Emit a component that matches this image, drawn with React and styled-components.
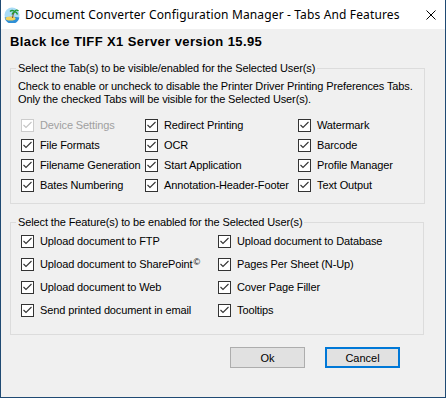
import React from "react";
import styled, { createGlobalStyle } from "styled-components";

const GlobalStyle = createGlobalStyle`
  html, body { margin: 0; padding: 0; background: #ffffff; }
  body { font-family: "Liberation Sans", Arial, sans-serif; }
  * { box-sizing: border-box; }
`;

const Window = styled.div`
  width: 446px;
  height: 398px;
  border: 1px solid #1f4a73;
  border-top: none;
  background: #f0f0f0;
  display: flex;
  flex-direction: column;
  overflow: hidden;
`;

const TitleBar = styled.div`
  height: 29px;
  flex: 0 0 29px;
  background: #ffffff;
  display: flex;
  align-items: center;
  padding: 0 9px 0 3px;
  gap: 5px;
`;

const Title = styled.div`
  flex: 1;
  font-family: "Noto Sans", "Open Sans", sans-serif;
  font-size: 12px;
  letter-spacing: 0.14px;
  color: #000;
  white-space: nowrap;
  line-height: 16px;
`;

const Body = styled.div`
  flex: 1;
  padding: 6px 20px 0 8px;
  display: flex;
  flex-direction: column;
  font-size: 11px;
  letter-spacing: -0.12px;
  color: #000;
`;

const Heading = styled.div`
  font-weight: bold;
  font-size: 13px;
  letter-spacing: 0.4px;
  line-height: 14px;
  padding-left: 1px;
`;

const Group = styled.fieldset`
  margin: ${(p) => p.$top}px ${(p) => p.$right}px 0 1px;
  padding: 0 0 ${(p) => p.$bottom}px 7px;
  border: 1px solid #dcdcdc;
  min-width: 0;
`;

const Legend = styled.legend`
  padding: 0 2px;
  margin-left: -2px;
  font-size: 11px;
  line-height: 13px;
`;

const Desc = styled.div`
  margin-top: 5px;
  line-height: 13px;
`;

const Grid = styled.div`
  display: grid;
  grid-template-columns: ${(p) => p.$cols};
  grid-auto-rows: ${(p) => p.$row}px;
  align-items: center;
  margin: ${(p) => p.$top}px 0 0 3px;
`;

const Item = styled.label`
  display: flex;
  align-items: center;
  gap: 6px;
  white-space: nowrap;
  line-height: 13px;
  color: ${(p) => (p.$disabled ? "#a0a0a0" : "#000")};
`;

const Box = styled.span`
  width: 13px;
  height: 13px;
  flex: 0 0 13px;
  border: 1px solid ${(p) => (p.$disabled ? "#cccccc" : "#333333")};
  background: #ffffff;
  display: flex;
  align-items: center;
  justify-content: center;
`;

const Sup = styled.span`
  font-size: 9px;
  position: relative;
  top: -3px;
  margin-left: 1px;
`;

const ButtonRow = styled.div`
  display: flex;
  justify-content: flex-end;
  gap: 20px;
  margin-top: 12px;
  padding-right: 25px;
`;

const Button = styled.button`
  width: 75px;
  height: 21px;
  padding: 0;
  font-family: "Liberation Sans", Arial, sans-serif;
  font-size: 11px;
  color: #000;
  background: #e1e1e1;
  border: ${(p) => (p.$focused ? "2px solid #0078d7" : "1px solid #adadad")};
`;

const CloseBtn = styled.div`
  width: 10px;
  height: 10px;
  display: flex;
`;

function Check({ label, disabled }) {
  const c = disabled ? "#c4c4c4" : "#333333";
  return (
    <Item $disabled={disabled}>
      <Box $disabled={disabled}>
        <svg width="11" height="11" viewBox="0 0 11 11">
          <path d="M1.5 5 L4 7.5 L9.5 2" fill="none" stroke={c} strokeWidth="1.1" />
        </svg>
      </Box>
      <span>{label}</span>
    </Item>
  );
}

function AppIcon() {
  return (
    <svg width="16" height="16" viewBox="0 0 16 16">
      <circle cx="8" cy="8" r="7.5" fill="#a9dcf7" />
      <path d="M0.6 10.5 Q8 9 15.4 10.5 A7.5 7.5 0 0 1 0.6 10.5 Z" fill="#2f8fd6" />
      <ellipse cx="6.5" cy="11.5" rx="5" ry="2" fill="#f2d45c" />
      <path d="M8.5 11 Q9 7 10.5 4.5" fill="none" stroke="#8a5a2b" strokeWidth="1.2" />
      <path d="M10.5 4.5 Q8 2.5 6 4.5 M10.5 4.5 Q12.5 2 14.5 4 M10.5 4.5 Q9 5.5 8 7.5 M10.5 4.5 Q13 5 13.5 7.5" fill="none" stroke="#1f9a36" strokeWidth="1.4" />
    </svg>
  );
}

const tabCols = [
  [
    { label: "Device Settings", disabled: true },
    { label: "File Formats" },
    { label: "Filename Generation" },
    { label: "Bates Numbering" },
  ],
  [
    { label: "Redirect Printing" },
    { label: "OCR" },
    { label: "Start Application" },
    { label: "Annotation-Header-Footer" },
  ],
  [
    { label: "Watermark" },
    { label: "Barcode" },
    { label: "Profile Manager" },
    { label: "Text Output" },
  ],
];

const tabItems = [];
for (let r = 0; r < 4; r++) for (let c = 0; c < 3; c++) tabItems.push(tabCols[c][r]);

const featureItems = [
  { label: "Upload document to FTP" },
  { label: "Upload document to Database" },
  {
    label: (
      <>
        Upload document to SharePoint<Sup>©</Sup>
      </>
    ),
  },
  { label: "Pages Per Sheet (N-Up)" },
  { label: "Upload document to Web" },
  { label: "Cover Page Filler" },
  { label: "Send printed document in email" },
  { label: "Tooltips" },
];

export default function App() {
  return (
    <>
      <GlobalStyle />
      <Window>
        <TitleBar>
          <AppIcon />
          <Title>Document Converter Configuration Manager - Tabs And Features</Title>
          <CloseBtn>
            <svg width="10" height="10" viewBox="0 0 10 10">
              <path d="M0.5 0.5 L9.5 9.5 M9.5 0.5 L0.5 9.5" stroke="#000" strokeWidth="1" />
            </svg>
          </CloseBtn>
        </TitleBar>
        <Body>
          <Heading>Black Ice TIFF X1 Server version 15.95</Heading>
          <Group $top={13} $right={0} $bottom={8}>
            <Legend>Select the Tab(s) to be visible/enabled for the Selected User(s)</Legend>
            <Desc>
              Check to enable or uncheck to disable the Printer Driver Printing Preferences Tabs.
              <br />
              Only the checked Tabs will be visible for the Selected User(s).
            </Desc>
            <Grid $cols="124px 153px 1fr" $row={20} $top={9}>
              {tabItems.map((it, i) => (
                <Check key={i} label={it.label} disabled={it.disabled} />
              ))}
            </Grid>
          </Group>
          <Group $top={12} $right={1} $bottom={12}>
            <Legend>Select the Feature(s) to be enabled for the Selected User(s)</Legend>
            <Grid $cols="197px 1fr" $row={23} $top={1}>
              {featureItems.map((it, i) => (
                <Check key={i} label={it.label} />
              ))}
            </Grid>
          </Group>
          <ButtonRow>
            <Button>Ok</Button>
            <Button $focused>Cancel</Button>
          </ButtonRow>
        </Body>
      </Window>
    </>
  );
}
